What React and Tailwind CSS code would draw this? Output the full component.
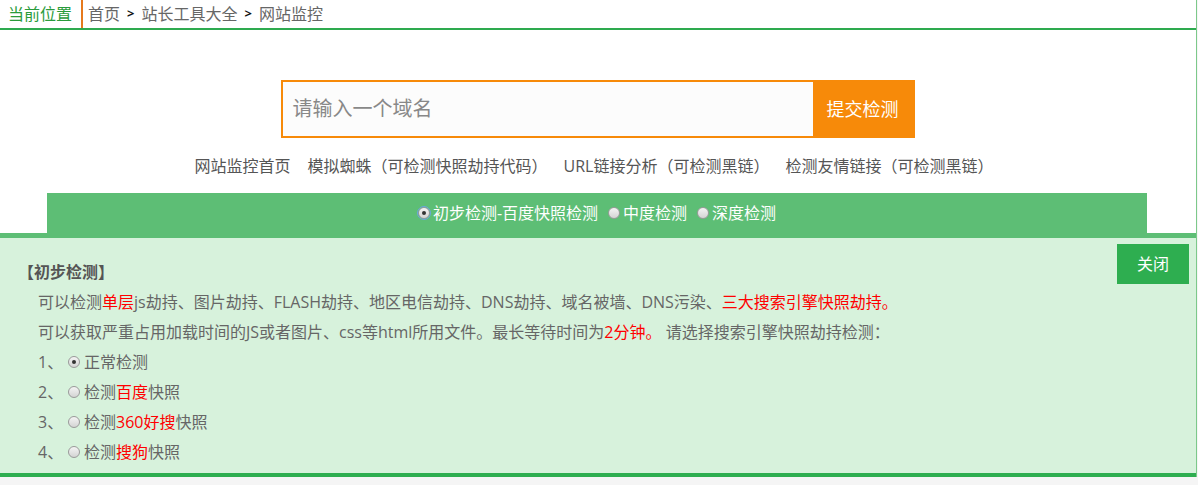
// Website monitor page: breadcrumb, domain search, tool links and the detection panel.
const font = { fontFamily: '"Open Sans", "Noto Sans CJK SC", sans-serif' };

const Radio = ({ checked, ring = false }) => (
  <span
    className={`relative inline-block h-[12px] w-[12px] shrink-0 rounded-full border border-[#9a9a9a] bg-gradient-to-b from-[#f4f4f4] to-[#d4d4d4] ${
      ring ? "outline outline-1 outline-[#6aa6e0]" : ""
    }`}
  >
    {checked && (
      <span className="absolute left-[3px] top-[3px] h-[4px] w-[4px] rounded-full bg-[#333]" />
    )}
  </span>
);

const Red = ({ children }) => <span className="text-[#ff0000]">{children}</span>;

const options = [
  { n: "1、", checked: true, label: <>正常检测</> },
  { n: "2、", label: <>检测<Red>百度</Red>快照</> },
  { n: "3、", label: <>检测<Red>360好搜</Red>快照</> },
  { n: "4、", label: <>检测<Red>搜狗</Red>快照</> },
];

export default function App() {
  return (
    <div className="min-h-[485px] w-[1198px] bg-[#f5f5f5]" style={font}>
      <div className="w-[1197px] border-r border-[#7cc98a] bg-white">
        {/* breadcrumb */}
        <div className="flex h-[30px] items-center border-b-2 border-[#2eaa4f] text-[16px] text-[#666]">
          <span className="pl-[8px] pr-[9px] text-[#2a9b3b]">当前位置</span>
          <span className="flex h-[28px] items-center border-l-2 border-[#e6791c] pl-[5px]">
            首页<span className="mx-[7px] text-[13px] font-bold text-[#111]">&gt;</span>站长工具大全
            <span className="mx-[7px] text-[13px] font-bold text-[#111]">&gt;</span>网站监控
          </span>
        </div>

        {/* search */}
        <div className="flex justify-center pt-[50px]">
          <div className="ml-[-1px] flex h-[58px] w-[634px] border-2 border-[#f78a09]">
            <div className="flex flex-1 items-center bg-[#fcfcfc] pl-[10px] text-[20px] text-[#888]">
              请输入一个域名
            </div>
            <div className="flex w-[100px] items-center justify-center bg-[#f78a09] text-[18px] text-white">
              提交检测
            </div>
          </div>
        </div>

        {/* tool links */}
        <div className="flex h-[55px] items-center justify-center pr-[8px] text-[16px] text-[#555]">
          <span>网站监控首页</span>
          <span className="ml-[17px]">模拟蜘蛛（可检测快照劫持代码）</span>
          <span className="ml-[16px]">URL链接分析（可检测黑链）</span>
          <span className="ml-[16px]">检测友情链接（可检测黑链）</span>
        </div>

        {/* tabs */}
        <div className="mx-[47px] flex h-[40px] w-[1100px] items-center justify-center gap-[3px] bg-[#5dbe75] text-[16px] text-white">
          <Radio checked ring />
          <span>初步检测-百度快照检测</span>
          <span className="w-[4px]" />
          <Radio />
          <span>中度检测</span>
          <span className="w-[4px]" />
          <Radio />
          <span>深度检测</span>
        </div>

        {/* panel */}
        <div className="relative border-t-[5px] border-b-4 border-t-[#5dbe75] border-b-[#2eae50] bg-[#d7f2dc] pb-[6px] pt-[19px] text-[16px] leading-[30px] text-[#666]">
          <div className="absolute right-[7px] top-[6px] flex h-[40px] w-[72px] items-center justify-center bg-[#2eae50] text-[16px] text-white">
            关闭
          </div>
          <div className="pl-[18px] font-bold text-[#555]">【初步检测】</div>
          <div className="pl-[38px]">
            可以检测<Red>单层</Red>js劫持、图片劫持、FLASH劫持、地区电信劫持、DNS劫持、域名被墙、DNS污染、
            <Red>三大搜索引擎快照劫持。</Red>
          </div>
          <div className="pl-[38px]">
            可以获取严重占用加载时间的JS或者图片、css等html所用文件。最长等待时间为<Red>2分钟。</Red>
            {"  "}请选择搜索引擎快照劫持检测：
          </div>
          {options.map((o) => (
            <div key={o.n} className="flex items-center pl-[38px]">
              <span className="w-[30px]">{o.n}</span>
              <Radio checked={o.checked} />
              <span className="ml-[4px]">{o.label}</span>
            </div>
          ))}
        </div>
      </div>
    </div>
  );
}
